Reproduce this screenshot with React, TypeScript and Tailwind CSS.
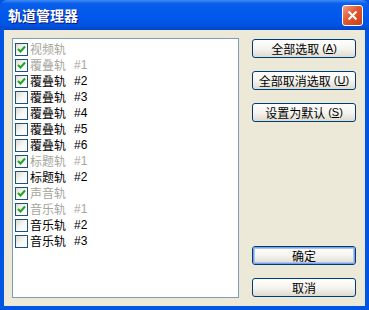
import { useState } from "react";

type Track = { name: string; num?: string; checked: boolean; disabled: boolean };

const initialTracks: Track[] = [
  { name: "视频轨", checked: true, disabled: true },
  { name: "覆叠轨", num: "#1", checked: true, disabled: true },
  { name: "覆叠轨", num: "#2", checked: true, disabled: false },
  { name: "覆叠轨", num: "#3", checked: false, disabled: false },
  { name: "覆叠轨", num: "#4", checked: false, disabled: false },
  { name: "覆叠轨", num: "#5", checked: false, disabled: false },
  { name: "覆叠轨", num: "#6", checked: false, disabled: false },
  { name: "标题轨", num: "#1", checked: true, disabled: true },
  { name: "标题轨", num: "#2", checked: false, disabled: false },
  { name: "声音轨", checked: true, disabled: true },
  { name: "音乐轨", num: "#1", checked: true, disabled: true },
  { name: "音乐轨", num: "#2", checked: false, disabled: false },
  { name: "音乐轨", num: "#3", checked: false, disabled: false },
];

const CheckBox = ({ checked }: { checked: boolean }) => (
  <span className="w-[13px] h-[13px] border border-[#1c5180] bg-gradient-to-br from-[#dcdbd5] via-[#f6f6f3] to-white flex items-center justify-center shrink-0">
    {checked && (
      <svg width="9" height="9" viewBox="0 0 9 9">
        <path d="M1 4 L3.5 6.5 L8 1.5" stroke="#21a121" strokeWidth="2" fill="none" />
      </svg>
    )}
  </span>
);

const XpButton = ({
  label,
  hotkey,
  isDefault,
}: {
  label: string;
  hotkey?: string;
  isDefault?: boolean;
}) => (
  <button className="h-[19px] w-[104px] rounded-[3px] border border-[#003c74] bg-gradient-to-b from-white via-[#f5f4ef] to-[#dedbd0] p-0 text-[12px] leading-none text-black">
    <span
      className={
        "flex h-full w-full items-center justify-center rounded-[2px] " +
        (isDefault ? "border border-[#7e9fe3] shadow-[inset_0_0_0_1px_#a9c3f2]" : "")
      }
    >
      {label}
      {hotkey && (
        <span className="ml-[3px] font-['Liberation_Sans',sans-serif] text-[11px]">
          (<span className="underline">{hotkey}</span>)
        </span>
      )}
    </span>
  </button>
);

export default function App() {
  const [tracks, setTracks] = useState(initialTracks);

  const toggle = (i: number) => {
    if (tracks[i].disabled) return;
    setTracks(tracks.map((t, j) => (j === i ? { ...t, checked: !t.checked } : t)));
  };

  return (
    <div className="w-[369px] h-[310px] flex flex-col bg-[#0054e3] font-['Noto_Sans_CJK_SC','Noto_Sans',sans-serif] select-none">
      {/* 标题栏 */}
      <div className="h-[30px] shrink-0 flex items-center justify-between pl-[8px] pr-[6px] rounded-t-[7px] bg-[linear-gradient(to_bottom,#3c8cf8_0%,#0a5ee8_12%,#0058ee_50%,#0053e0_85%,#0046c8_100%)]">
        <span className="text-white text-[14px] font-bold [text-shadow:1px_1px_0_#0a1883]">轨道管理器</span>
        <span className="w-[21px] h-[21px] rounded-[3px] border border-white bg-[linear-gradient(135deg,#f0a089_0%,#e2582e_45%,#c8401a_100%)] flex items-center justify-center">
          <svg width="11" height="11" viewBox="0 0 11 11">
            <path d="M1.5 1.5 L9.5 9.5 M9.5 1.5 L1.5 9.5" stroke="white" strokeWidth="2" />
          </svg>
        </span>
      </div>

      {/* 客户区 */}
      <div className="flex-1 mx-[4px] mb-[4px] bg-[#ece9d8] flex pl-[8px] pr-[9px] pt-[8px] pb-[8px] gap-[13px]">
        <div className="w-[229px] h-full bg-white border border-[#7f9db9] pt-[2px] pl-[2px]">
          {tracks.map((t, i) => (
            <div
              key={i}
              onClick={() => toggle(i)}
              className="h-[16px] flex items-center gap-[2px] text-[12px] leading-none"
            >
              <CheckBox checked={t.checked} />
              <span className={t.disabled ? "text-[#a6a59c]" : "text-black"}>{t.name}</span>
              {t.num && (
                <span
                  className={
                    "ml-[6px] font-['Liberation_Sans',sans-serif] text-[12px] " +
                    (t.disabled ? "text-[#a6a59c]" : "text-black")
                  }
                >
                  {t.num}
                </span>
              )}
            </div>
          ))}
        </div>

        <div className="flex flex-col pt-[1px] pb-[1px]">
          <div className="flex flex-col gap-[13px]">
            <XpButton label="全部选取" hotkey="A" />
            <XpButton label="全部取消选取" hotkey="U" />
            <XpButton label="设置为默认" hotkey="S" />
          </div>
          <div className="flex-1" />
          <div className="flex flex-col gap-[13px]">
            <XpButton label="确定" isDefault />
            <XpButton label="取消" />
          </div>
        </div>
      </div>
    </div>
  );
}
